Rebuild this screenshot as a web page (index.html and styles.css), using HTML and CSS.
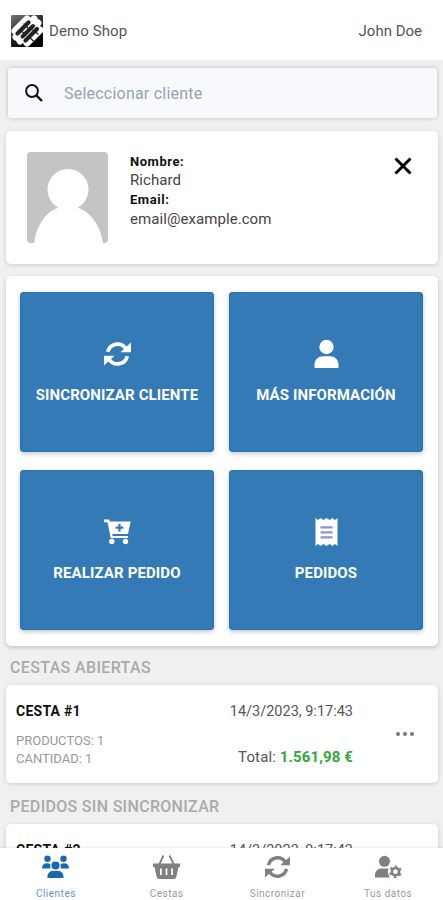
FILE: index.html
```html
<!DOCTYPE html>
<html lang="es">
<head>
    <meta charset="UTF-8">
    <meta name="viewport" content="width=device-width, initial-scale=1.0">
    <title>Demo Shop</title>
    <link rel="stylesheet" href="styles.css">
</head>
<body>
    <!-- Shared icons -->
    <svg class="sprite" aria-hidden="true">
        <symbol id="icon-sync" viewBox="0 0 26 25">
            <path d="M3.6 10.5A9.6 9.6 0 0 1 20.8 7M22.4 14.5A9.6 9.6 0 0 1 5.2 18" fill="none" stroke="currentColor" stroke-width="3.6"/>
            <path d="M26 1.5V10.8H15.8zM0 23.5V14.2H10.2z" fill="currentColor"/>
        </symbol>
    </svg>

    <div class="app">
        <header class="topbar">
            <div class="brand">
                <svg class="logo" viewBox="0 0 32 32">
                    <defs>
                        <linearGradient id="logo-bg" x1="0" y1="0" x2="0.6" y2="1">
                            <stop offset="0" stop-color="#777"/>
                            <stop offset="0.6" stop-color="#222"/>
                            <stop offset="1" stop-color="#000"/>
                        </linearGradient>
                    </defs>
                    <rect width="32" height="32" rx="1" fill="url(#logo-bg)"/>
                    <g stroke="#fff" stroke-linecap="round" fill="none">
                        <path d="M4 16L16 4M5 22L23 4M9 26L27 8M16 28L29 15" stroke-width="7"/>
                    </g>
                    <g stroke="#222" stroke-linecap="round" fill="none">
                        <path d="M6.500 18.500L17.500 7.500M14.500 25.500L26 14" stroke-width="4.2"/>
                        <path d="M11.500 21.500L22 11" stroke-width="4"/>
                        <path d="M9 15L14 19M18 22L22.500 26M13 9L17 13M22 15L27 19" stroke-width="1.3"/>
                    </g>
                </svg>
                <span class="brand-name">Demo Shop</span>
            </div>
            <span class="user-name">John Doe</span>
        </header>

        <main class="content">
            <div class="search">
                <svg class="search-icon" viewBox="0 0 18 18">
                    <circle cx="7" cy="7" r="5.9" fill="none" stroke="#111" stroke-width="2"/>
                    <path d="M11.3 11.3L17 17" stroke="#111" stroke-width="2.4"/>
                </svg>
                <span class="placeholder">Seleccionar cliente</span>
            </div>

            <section class="card customer">
                <svg class="avatar" viewBox="0 0 81 91">
                    <rect width="81" height="91" rx="4" fill="#c4c4c4"/>
                    <circle cx="41" cy="37.5" r="20.5" fill="#fff"/>
                    <path d="M7 92C9 73 21 54 41 54S74 73 76 92z" fill="#fff"/>
                </svg>
                <div class="customer-data">
                    <b class="label">Nombre:</b>
                    <span>Richard</span>
                    <b class="label">Email:</b>
                    <span>email@example.com</span>
                </div>
                <svg class="close" viewBox="0 0 18 18">
                    <path d="M1.5 1.5L16.5 16.5M16.5 1.5L1.5 16.5" stroke="#000" stroke-width="2.9"/>
                </svg>
            </section>

            <section class="card actions">
                <div class="tile">
                    <svg class="tile-icon" viewBox="0 0 26 25"><use href="#icon-sync"/></svg>
                    <span>SINCRONIZAR CLIENTE</span>
                </div>
                <div class="tile">
                    <svg class="tile-icon" viewBox="0 0 26 28">
                        <circle cx="13" cy="7" r="7.2" fill="#fff"/>
                        <path d="M1 28V25C1 19.500 5 16.300 9.500 16.300H16.500C21 16.300 25 19.500 25 25V28z" fill="#fff"/>
                    </svg>
                    <span>MÁS INFORMACIÓN</span>
                </div>
                <div class="tile">
                    <svg class="tile-icon" viewBox="0 0 27 25">
                        <path d="M0 0H5.200L5.800 2H26.700L24 14.500H8.300L8.700 16.500H24V18.500H6.700L3.500 2.800H0z" fill="#fff"/>
                        <circle cx="7.8" cy="22" r="2.7" fill="#fff"/>
                        <circle cx="21.5" cy="22" r="2.7" fill="#fff"/>
                        <path d="M15.500 4.500V12M11.700 8.200H19.300" stroke="#337ab7" stroke-width="2.2"/>
                    </svg>
                    <span>REALIZAR PEDIDO</span>
                </div>
                <div class="tile">
                    <svg class="tile-icon" viewBox="0 0 22 28">
                        <path d="M0 0L2.500 2L5 0L8 2L11 0L14 2L17 0L19.500 2L22 0V28L19.500 26L17 28L14 26L11 28L8 26L5 28L2.500 26L0 28z" fill="#fff"/>
                        <path d="M5 9.300H17M5 14.300H17M5 19.300H17" stroke="#8298cd" stroke-width="2.3"/>
                    </svg>
                    <span>PEDIDOS</span>
                </div>
            </section>

            <h2 class="section-title">CESTAS ABIERTAS</h2>
            <section class="card basket">
                <div class="basket-left">
                    <b class="basket-name">CESTA #1</b>
                    <span>PRODUCTOS: 1</span>
                    <span>CANTIDAD: 1</span>
                </div>
                <div class="basket-right">
                    <span class="date">14/3/2023, 9:17:43</span>
                    <span class="total">Total: <b>1.561,98 €</b></span>
                </div>
                <svg class="more" viewBox="0 0 18 4">
                    <circle cx="2" cy="2" r="2"/>
                    <circle cx="9" cy="2" r="2"/>
                    <circle cx="16" cy="2" r="2"/>
                </svg>
            </section>

            <h2 class="section-title title-pending">PEDIDOS SIN SINCRONIZAR</h2>
            <section class="card basket">
                <div class="basket-left">
                    <b class="basket-name">CESTA #2</b>
                </div>
                <div class="basket-right">
                    <span class="date">14/3/2023, 9:17:43</span>
                </div>
                <svg class="more" viewBox="0 0 18 4">
                    <circle cx="2" cy="2" r="2"/>
                    <circle cx="9" cy="2" r="2"/>
                    <circle cx="16" cy="2" r="2"/>
                </svg>
            </section>
        </main>

        <nav class="tabs">
            <div class="tab active">
                <svg class="tab-icon" viewBox="0 0 27 24">
                    <g fill="currentColor">
                        <circle cx="5.5" cy="3.8" r="3.2"/>
                        <circle cx="21.5" cy="3.8" r="3.2"/>
                        <circle cx="13.5" cy="10.5" r="4.1"/>
                        <path d="M0 13.500C0 10 2 8.200 5 8.200Q7.500 8.200 8.500 9.500Q7.800 11.500 8.700 13.500zM27 13.500C27 10 25 8.200 22 8.200Q19.500 8.200 18.500 9.500Q19.200 11.500 18.300 13.500zM5.500 23V21.500C5.500 18 8 16 11 16H16C19 16 21.500 18 21.500 21.500V23z"/>
                    </g>
                </svg>
                <span>Clientes</span>
            </div>
            <div class="tab">
                <svg class="tab-icon" viewBox="0 0 27 24">
                    <path d="M6 10L10.500 .5M21 10L16.500 .5" stroke="currentColor" stroke-width="1.8"/>
                    <path fill="currentColor" fill-rule="evenodd" d="M0 8.500H27V12H25.500L23.300 22Q22.900 24 21 24H6Q4.100 24 3.700 22L1.500 12H0zM7 13.500V20H8.800V13.500zM12.600 13.500V20H14.400V13.500zM18.200 13.500V20H20V13.500z"/>
                </svg>
                <span>Cestas</span>
            </div>
            <div class="tab">
                <svg class="tab-icon" viewBox="0 0 26 25"><use href="#icon-sync"/></svg>
                <span>Sincronizar</span>
            </div>
            <div class="tab">
                <svg class="tab-icon" viewBox="0 0 27 24">
                    <g fill="currentColor">
                        <circle cx="9.5" cy="6.3" r="5.5"/>
                        <path d="M0 22.500V20C0 16 3 13.500 7 13.500H13.500Q11.800 18 15 22.500z"/>
                    </g>
                    <circle cx="20.5" cy="16.7" r="3.6" fill="none" stroke="currentColor" stroke-width="2.5"/>
                    <circle cx="20.5" cy="16.7" r="5.4" fill="none" stroke="currentColor" stroke-width="1.9" stroke-dasharray="2.6 3.055" stroke-dashoffset="1.3" transform="rotate(-90 20.5 16.7)"/>
                </svg>
                <span>Tus datos</span>
            </div>
        </nav>
    </div>
</body>
</html>
```
FILE: styles.css
```css
* {
    box-sizing: border-box;
}

body {
    margin: 0;
    background: #f0f0f0;
    font-family: Roboto, "Liberation Sans", sans-serif;
    color: #444;
    overflow: hidden;
}

.sprite {
    display: none;
}

svg {
    display: block;
    flex: none;
}

span,
b {
    white-space: nowrap;
}

.app {
    display: flex;
    flex-direction: column;
    height: 900px;
}

.topbar {
    display: flex;
    justify-content: space-between;
    align-items: center;
    flex: none;
    height: 60px;
    padding: 2px 21px 0 11px;
    background: #fff;
    font-size: 15px;
    color: #555;
}

.brand {
    display: flex;
    align-items: center;
    gap: 6px;
}

.logo {
    width: 32px;
    height: 32px;
}

.brand-name {
    letter-spacing: 0.1px;
}

.content {
    flex: 1;
    min-height: 0;
    overflow: hidden;
    padding: 8px 5px 0 6px;
}

.search {
    display: flex;
    align-items: center;
    gap: 21px;
    height: 50px;
    margin: 0 1px 13px 2px;
    padding-left: 17px;
    background: #f7f9fd;
    border-radius: 3px;
    box-shadow: 0 0 4px rgba(0, 0, 0, 0.22);
}

.search-icon {
    width: 18px;
    height: 18px;
}

.placeholder {
    font-size: 16px;
    letter-spacing: 0.22px;
    color: #98a1b5;
}

.card {
    background: #fff;
    border-radius: 5px;
    box-shadow: 0 1px 4px rgba(0, 0, 0, 0.15);
}

.customer {
    display: flex;
    height: 133px;
    margin-bottom: 12px;
    padding: 21px 26px 0 21px;
}

.avatar {
    width: 81px;
    height: 91px;
}

.customer-data {
    display: flex;
    flex-direction: column;
    flex: 1;
    margin-left: 22px;
    font-size: 15px;
    letter-spacing: 0.07px;
    line-height: 19.2px;
}

.label {
    font-size: 13px;
    color: #111;
    letter-spacing: 0.55px;
}

.close {
    width: 18px;
    height: 18px;
    margin-top: 5px;
}

.actions {
    display: grid;
    grid-template-columns: 194px 194px;
    grid-auto-rows: 160px;
    gap: 18px 15px;
    height: 370px;
    padding: 16px 14px;
    box-shadow: 0 2px 4px rgba(0, 0, 0, 0.18);
}

.tile {
    display: flex;
    flex-direction: column;
    align-items: center;
    justify-content: center;
    gap: 18px;
    padding-bottom: 1px;
    background: #337ab7;
    border-radius: 4px;
    box-shadow: 0 2px 5px rgba(0, 0, 0, 0.22), inset 0 0 2px #0b66aa;
    color: #fff;
    font-size: 15px;
    font-weight: 700;
    letter-spacing: 0.12px;
    line-height: 18px;
}

.tile-icon {
    width: 27px;
    height: 28px;
}

.section-title {
    margin: 0;
    padding-left: 4px;
    height: 39px;
    line-height: 43px;
    font-size: 16px;
    font-weight: 500;
    letter-spacing: 0.36px;
    color: #aaa;
    white-space: nowrap;
}

.title-pending {
    height: 41px;
    line-height: 48px;
    letter-spacing: 0.31px;
}

.basket {
    display: flex;
    height: 98px;
    padding: 18px 24px 0 10px;
}

.basket-left {
    display: flex;
    flex-direction: column;
    flex: 1;
    font-size: 13px;
    line-height: 17.5px;
    color: #999;
}

.basket-name {
    margin-bottom: 11.5px;
    font-size: 14px;
    letter-spacing: 0.25px;
    color: #111;
}

.basket-right {
    display: flex;
    flex-direction: column;
    align-items: flex-end;
    gap: 27px;
    margin-right: 43px;
    font-size: 15px;
    line-height: 18px;
    color: #555;
}

.date {
    font-size: 14.5px;
}

.total {
    letter-spacing: 0.12px;
}

.total b {
    color: #31a838;
}

.more {
    width: 18px;
    height: 4px;
    margin-top: 29px;
    fill: #777;
}

.tabs {
    display: grid;
    grid-template-columns: repeat(4, 1fr);
    flex: none;
    height: 52px;
    background: #fff;
    box-shadow: 0 -1px 2px rgba(0, 0, 0, 0.08);
    z-index: 1;
}

.tab {
    display: flex;
    flex-direction: column;
    align-items: center;
    gap: 8px;
    padding: 7px 0 0 1px;
    color: #808080;
    font-size: 10px;
    letter-spacing: 0.5px;
    line-height: 14px;
}

.tab span {
    color: #999;
}

.tab-icon {
    width: 27px;
    height: 24px;
}

.tab.active {
    color: #1768b0;
}

.tab.active span {
    color: #6b92cc;
}
```
